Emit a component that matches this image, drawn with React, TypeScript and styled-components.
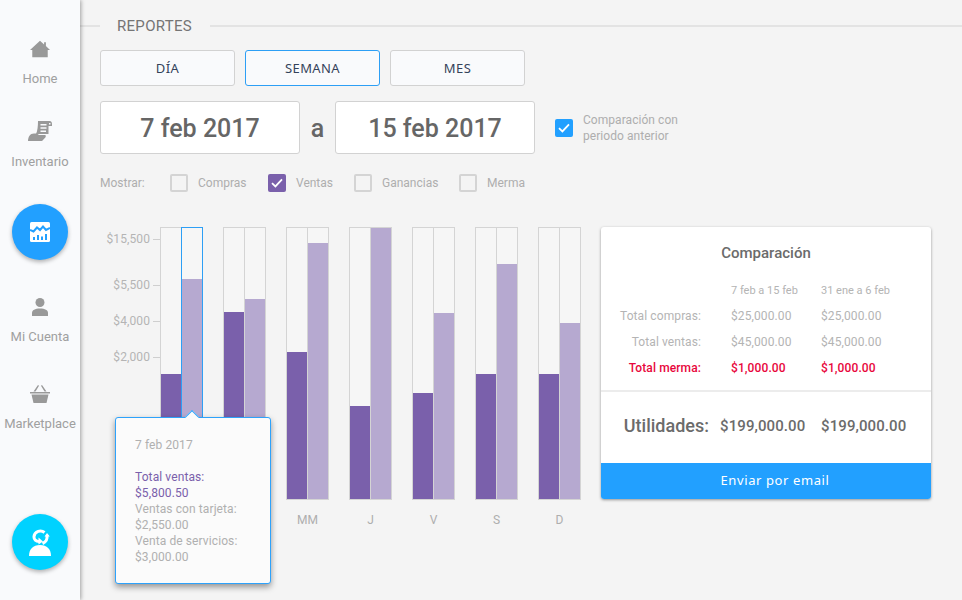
import React from 'react';
import styled, { createGlobalStyle } from 'styled-components';

const GlobalStyle = createGlobalStyle`
    html, body {
        margin: 0;
        padding: 0;
        height: 100%;
    }
    body {
        background: #f4f4f4;
        font-family: Roboto, "Liberation Sans", sans-serif;
        overflow: hidden;
    }
`;

const Page = styled.div`
    display: flex;
    width: 962px;
    height: 600px;
    overflow: hidden;
    background: #f4f4f4;
`;

const Sidebar = styled.nav`
    flex: 0 0 80px;
    height: 600px;
    box-sizing: border-box;
    padding-top: 40px;
    display: flex;
    flex-direction: column;
    align-items: center;
    background: #f9fafc;
    box-shadow: 1px 0 4px rgba(0, 0, 0, 0.35);
    z-index: 2;
`;

const NavItem = styled.a<{ $mt?: number }>`
    display: flex;
    flex-direction: column;
    align-items: center;
    margin-top: ${props => props.$mt || 0}px;
    font-size: 13px;
    line-height: 16px;
    white-space: nowrap;
    color: #a0a0a0;

    svg {
        display: block;
        margin-bottom: 13px;
    }
`;

const RoundButton = styled.div<{ $color: string; $mt: number }>`
    flex: 0 0 56px;
    width: 56px;
    height: 56px;
    margin-top: ${props => props.$mt}px;
    border-radius: 50%;
    display: flex;
    align-items: center;
    justify-content: center;
    background: ${props => props.$color};
    box-shadow: 0 2px 4px rgba(0, 0, 0, 0.3);
`;

const Main = styled.main`
    flex: 1;
    position: relative;
    min-width: 0;
`;

const Header = styled.header`
    display: flex;
    align-items: center;
    height: 16px;
    margin-top: 18px;
`;

const HeaderLine = styled.div<{ $grow?: boolean }>`
    height: 2px;
    background: #e3e3e3;
    flex: ${props => (props.$grow ? '1' : '0 0 20px')};
`;

const HeaderTitle = styled.h1`
    margin: 0 18px 0 17px;
    font-size: 15px;
    font-weight: 400;
    letter-spacing: 0.3px;
    color: #757575;
`;

const Content = styled.div`
    padding: 16px 0 0 20px;
`;

const Tabs = styled.div`
    display: flex;
    gap: 10px;
`;

const Tab = styled.button<{ $active?: boolean }>`
    width: 135px;
    height: 36px;
    padding: 0;
    box-sizing: border-box;
    border: 1px solid ${props => (props.$active ? '#2d9ff5' : '#d2d2d2')};
    border-radius: 3px;
    background: #f9fafc;
    font-family: "Noto Sans", sans-serif;
    font-size: 13px;
    letter-spacing: 0.4px;
    color: #34425a;
`;

const DateRow = styled.div`
    display: flex;
    align-items: center;
    margin-top: 15px;
`;

const DateBox = styled.div`
    width: 200px;
    height: 53px;
    box-sizing: border-box;
    padding-top: 2px;
    border: 1px solid #d2d2d2;
    border-radius: 3px;
    background: #fff;
    display: flex;
    align-items: center;
    justify-content: center;
    font-size: 25px;
    font-weight: 500;
    color: #666;
`;

const DateSep = styled.span`
    width: 35px;
    padding-top: 2px;
    text-align: center;
    font-size: 25px;
    font-weight: 500;
    color: #666;
`;

const CompareOption = styled.label`
    display: flex;
    align-items: center;
    margin-left: 20px;
    gap: 10px;
    font-size: 12px;
    line-height: 16px;
    letter-spacing: 0.05px;
    color: #aeaeae;
`;

const Check = styled.span<{ $color?: string }>`
    flex: 0 0 18px;
    width: 18px;
    height: 18px;
    box-sizing: border-box;
    border-radius: 2px;
    border: ${props => (props.$color ? 'none' : '2px solid #d4d4d4')};
    background: ${props => props.$color || 'transparent'};
    display: flex;
    align-items: center;
    justify-content: center;
`;

const FilterRow = styled.div`
    display: flex;
    align-items: center;
    height: 18px;
    margin-top: 20px;
    font-size: 12px;
    color: #aeaeae;
`;

const FilterLabel = styled.span`
    width: 70px;
`;

const FilterOption = styled.label<{ $width: number }>`
    display: flex;
    align-items: center;
    gap: 10px;
    width: ${props => props.$width}px;
`;

const ReportArea = styled.div`
    display: flex;
    margin-top: 35px;
`;

const Axis = styled.div`
    width: 60px;
    flex: 0 0 60px;
    display: flex;
    flex-direction: column;
    margin-top: 3px;
`;

const AxisRow = styled.div<{ $mt: number }>`
    display: flex;
    align-items: center;
    justify-content: flex-end;
    height: 16px;
    margin-top: ${props => props.$mt}px;
    font-size: 12px;
    letter-spacing: 0.1px;
    color: #b4b4b4;

    &::after {
        content: '';
        width: 7px;
        height: 1px;
        margin-left: 3px;
        background: #cfcfcf;
    }
`;

const Chart = styled.div`
    display: flex;
    gap: 20px;
`;

const BarGroup = styled.div`
    width: 43px;
    display: flex;
    flex-direction: column;
    align-items: center;
`;

const BarPair = styled.div`
    display: flex;
    width: 43px;
    height: 273px;
`;

const BarTrack = styled.div<{ $selected?: boolean }>`
    flex: 1;
    margin-left: -1px;
    display: flex;
    flex-direction: column;
    justify-content: flex-end;
    background: #f6f6f6;
    border: 1px solid ${props => (props.$selected ? '#2d9ff5' : '#d4d4d4')};
    position: relative;
    z-index: ${props => (props.$selected ? 1 : 0)};

    &:first-child {
        margin-left: 0;
    }
`;

const BarFill = styled.div<{ $light?: boolean }>`
    background: ${props => (props.$light ? '#b6a9d0' : '#7a60ab')};
`;

const BarLabel = styled.div`
    height: 16px;
    margin-top: 12px;
    font-size: 12px;
    line-height: 16px;
    color: #aeaeae;
`;

const Tooltip = styled.div`
    position: absolute;
    left: 35px;
    top: 417px;
    z-index: 3;
    width: 156px;
    height: 167px;
    box-sizing: border-box;
    padding: 19px 19px;
    border: 1px solid #2da2fb;
    border-radius: 3px;
    background: #fbfbfb;
    box-shadow: 0 3px 6px rgba(0, 0, 0, 0.4);
    font-size: 12px;
    line-height: 16px;
    letter-spacing: 0.1px;
    color: #b0b0b0;

    &::before {
        content: '';
        position: absolute;
        left: 71px;
        top: -6px;
        width: 9px;
        height: 9px;
        background: #fbfbfb;
        border-left: 1px solid #2da2fb;
        border-top: 1px solid #2da2fb;
        transform: rotate(45deg);
    }
`;

const TooltipDate = styled.div`
    margin-bottom: 16px;
`;

const TooltipStrong = styled.div`
    color: #7a60ab;
`;

const Card = styled.section`
    flex: 0 0 330px;
    width: 330px;
    height: 272px;
    margin-left: 20px;
    display: flex;
    flex-direction: column;
    border-radius: 3px;
    overflow: hidden;
    background: #fff;
    box-shadow: 0 1px 3px rgba(0, 0, 0, 0.4);
`;

const CardTitle = styled.h2`
    margin: 17px 0 0;
    font-size: 15px;
    line-height: 18px;
    font-weight: 500;
    text-align: center;
    color: #6b6b6b;
`;

const CompareTable = styled.div`
    display: grid;
    grid-template-columns: 100px 120px 110px;
    grid-auto-rows: 26px;
    margin-top: 15px;
    height: 113px;
    font-size: 12px;
    letter-spacing: 0.1px;
    align-items: center;
    color: #b4b4b4;
`;

const HeadCell = styled.div`
    font-size: 11px;
    letter-spacing: 0;
`;

const Cell = styled.div<{ $alert?: boolean }>`
    color: ${props => (props.$alert ? '#e8063c' : 'inherit')};
    font-weight: ${props => (props.$alert ? 500 : 400)};
`;

const RowLabel = styled(Cell)`
    text-align: right;
`;

const ValueCol = styled.div`
    padding-left: 30px;
`;

const ProfitRow = styled.div`
    display: flex;
    align-items: center;
    box-sizing: border-box;
    height: 73px;
    padding-bottom: 4px;
    border-top: 2px solid #ececec;
    color: #6b6b6b;
`;

const ProfitLabel = styled.span`
    width: 108px;
    text-align: right;
    margin-right: 11px;
    font-size: 18px;
    font-weight: 500;
`;

const ProfitValue = styled.span`
    width: 101px;
    font-size: 15px;
    font-weight: 500;
    letter-spacing: 0.1px;
`;

const EmailButton = styled.button`
    height: 36px;
    border: none;
    margin-top: auto;
    padding: 0 0 2px 18px;
    background: #22a0ff;
    color: #fff;
    font-family: "Noto Sans", sans-serif;
    font-size: 13px;
    letter-spacing: 0.6px;
`;

const CheckMark = () => (
    <svg width="12" height="10" viewBox="0 0 12 10">
        <path d="M1 5.2 4.4 8.4 11 1.4" fill="none" stroke="#fff" strokeWidth="1.8" />
    </svg>
);

const HomeIcon = () => (
    <svg width="20" height="18" viewBox="0 0 22 18" fill="#999">
        <path d="M11 0 15.5 4V1.5H17.5V5.8L22 10H19.5V18H2.5V10H0Z" />
    </svg>
);

const ScrollIcon = () => (
    <svg width="24" height="20" viewBox="0 0 24 20" fill="#999">
        <path
            fillRule="evenodd"
            d="M10 0H21.5C23.5 0 24 1.5 24 3.5V5H20.5V13H8C9.5 10 10 5 10 0ZM12.5 3V4.5H18.5V3ZM12.5 6.3V7.8H18.5V6.3ZM12.5 9.5V11H18V9.5ZM21 2V3.5H22.5V2Z"
        />
        <path d="M0 20C0 16 2 12.5 6 12.5H9L11 14H17C18 14 18 16 17.3 16.5L15 19C14.5 19.7 14 20 13 20Z" />
    </svg>
);

const StatsIcon = () => (
    <svg width="20" height="20" viewBox="0 0 20 20">
        <rect width="20" height="20" rx="1.5" fill="#fff" />
        <path d="M0 8 3.5 9.5 7 5.5 10 8 13 4.5 16 8 20 6" fill="none" stroke="#22a0ff" strokeWidth="2" />
        <path d="M3 15H5V18H3ZM7 13H9V18H7ZM11 14.5H13V18H11ZM15 12H17V18H15Z" fill="#22a0ff" />
    </svg>
);

const PersonIcon = () => (
    <svg width="16" height="18" viewBox="0 0 16 18" fill="#999">
        <circle cx="8" cy="4.5" r="4.5" />
        <path d="M0 18V15C0 12 3 10.5 8 10.5S16 12 16 15V18Z" />
    </svg>
);

const BasketIcon = () => (
    <svg width="20" height="18" viewBox="0 0 20 18" fill="#999">
        <path d="M0 7H20V8.5H0Z" />
        <path d="M1.5 9.5H18.5L16.5 18H3.5Z" />
        <path d="M3.5 6.5 8 0 9 .8 5.5 6.5ZM16.5 6.5 12 0 11 .8 14.5 6.5Z" />
    </svg>
);

const SupportIcon = () => (
    <svg width="22" height="27" viewBox="0 0 22 27" fill="#fff">
        <path d="M0 27C0 20 4 16 11 16S22 20 22 27Z" />
        <path d="M15.5 3.5C12 .5 5.5 2 5 7.5 4.8 10.5 7 12.5 10 12.5" fill="none" stroke="#fff" strokeWidth="3" />
        <path d="M9.5 8.5 14 12.5 9.5 15.5Z" />
        <path d="M18 6.5C18.5 10 17 13 13.5 14.5" fill="none" stroke="#fff" strokeWidth="3" />
        <path d="M15.5 7.5 18 4 20.8 7.5Z" />
    </svg>
);

const filters = [
    { label: 'Compras', width: 98 },
    { label: 'Ventas', width: 86, color: '#7a60ab' },
    { label: 'Ganancias', width: 105 },
    { label: 'Merma', width: 80 },
];

// heights are px inside the 273px track; the first two labels sit under the tooltip
const bars = [
    { id: 'l', label: '', dark: 125, light: 220, selected: true },
    { id: 'm', label: '', dark: 187, light: 200 },
    { id: 'mm', label: 'MM', dark: 147, light: 256 },
    { id: 'j', label: 'J', dark: 93, light: 271 },
    { id: 'v', label: 'V', dark: 106, light: 186 },
    { id: 's', label: 'S', dark: 125, light: 235 },
    { id: 'd', label: 'D', dark: 125, light: 176 },
];

const ticks = [
    { label: '$15,500', mt: 1 },
    { label: '$5,500', mt: 30 },
    { label: '$4,000', mt: 20 },
    { label: '$2,000', mt: 20 },
];

const rows = [
    { label: 'Total compras:', value: '$25,000.00' },
    { label: 'Total ventas:', value: '$45,000.00' },
    { label: 'Total merma:', value: '$1,000.00', alert: true },
];

export default function App() {
    return (
        <Page>
            <GlobalStyle />
            <Sidebar>
                <NavItem>
                    <HomeIcon />
                    Home
                </NavItem>
                <NavItem $mt={34}>
                    <ScrollIcon />
                    Inventario
                </NavItem>
                <RoundButton $color="#22a0ff" $mt={34}>
                    <StatsIcon />
                </RoundButton>
                <NavItem $mt={38}>
                    <PersonIcon />
                    Mi Cuenta
                </NavItem>
                <NavItem $mt={40}>
                    <BasketIcon />
                    Marketplace
                </NavItem>
                <RoundButton $color="#00d2ff" $mt={82}>
                    <SupportIcon />
                </RoundButton>
            </Sidebar>
            <Main>
                <Header>
                    <HeaderLine />
                    <HeaderTitle>REPORTES</HeaderTitle>
                    <HeaderLine $grow />
                </Header>
                <Content>
                    <Tabs>
                        <Tab>DÍA</Tab>
                        <Tab $active>SEMANA</Tab>
                        <Tab>MES</Tab>
                    </Tabs>
                    <DateRow>
                        <DateBox>7 feb 2017</DateBox>
                        <DateSep>a</DateSep>
                        <DateBox>15 feb 2017</DateBox>
                        <CompareOption>
                            <Check $color="#22a0ff">
                                <CheckMark />
                            </Check>
                            <span>
                                Comparación con
                                <br />
                                periodo anterior
                            </span>
                        </CompareOption>
                    </DateRow>
                    <FilterRow>
                        <FilterLabel>Mostrar:</FilterLabel>
                        {filters.map(f => (
                            <FilterOption key={f.label} $width={f.width}>
                                <Check $color={f.color}>{f.color && <CheckMark />}</Check>
                                {f.label}
                            </FilterOption>
                        ))}
                    </FilterRow>
                    <ReportArea>
                        <Axis>
                            {ticks.map(t => (
                                <AxisRow key={t.label} $mt={t.mt}>
                                    {t.label}
                                </AxisRow>
                            ))}
                        </Axis>
                        <Chart>
                            {bars.map(b => (
                                <BarGroup key={b.id}>
                                    <BarPair>
                                        <BarTrack>
                                            <BarFill style={{ height: b.dark }} />
                                        </BarTrack>
                                        <BarTrack $selected={b.selected}>
                                            <BarFill $light style={{ height: b.light }} />
                                        </BarTrack>
                                    </BarPair>
                                    <BarLabel>{b.label}</BarLabel>
                                </BarGroup>
                            ))}
                        </Chart>
                        <Card>
                            <CardTitle>Comparación</CardTitle>
                            <CompareTable>
                                <div />
                                <ValueCol>
                                    <HeadCell>7 feb a 15 feb</HeadCell>
                                </ValueCol>
                                <HeadCell>31 ene a 6 feb</HeadCell>
                                {rows.map(r => (
                                    <React.Fragment key={r.label}>
                                        <RowLabel $alert={r.alert}>{r.label}</RowLabel>
                                        <ValueCol>
                                            <Cell $alert={r.alert}>{r.value}</Cell>
                                        </ValueCol>
                                        <Cell $alert={r.alert}>{r.value}</Cell>
                                    </React.Fragment>
                                ))}
                            </CompareTable>
                            <ProfitRow>
                                <ProfitLabel>Utilidades:</ProfitLabel>
                                <ProfitValue>$199,000.00</ProfitValue>
                                <ProfitValue>$199,000.00</ProfitValue>
                            </ProfitRow>
                            <EmailButton>Enviar por email</EmailButton>
                        </Card>
                    </ReportArea>
                </Content>
                <Tooltip>
                    <TooltipDate>7 feb 2017</TooltipDate>
                    <TooltipStrong>Total ventas:</TooltipStrong>
                    <TooltipStrong>$5,800.50</TooltipStrong>
                    <div>Ventas con tarjeta:</div>
                    <div>$2,550.00</div>
                    <div>Venta de servicios:</div>
                    <div>$3,000.00</div>
                </Tooltip>
            </Main>
        </Page>
    );
}
